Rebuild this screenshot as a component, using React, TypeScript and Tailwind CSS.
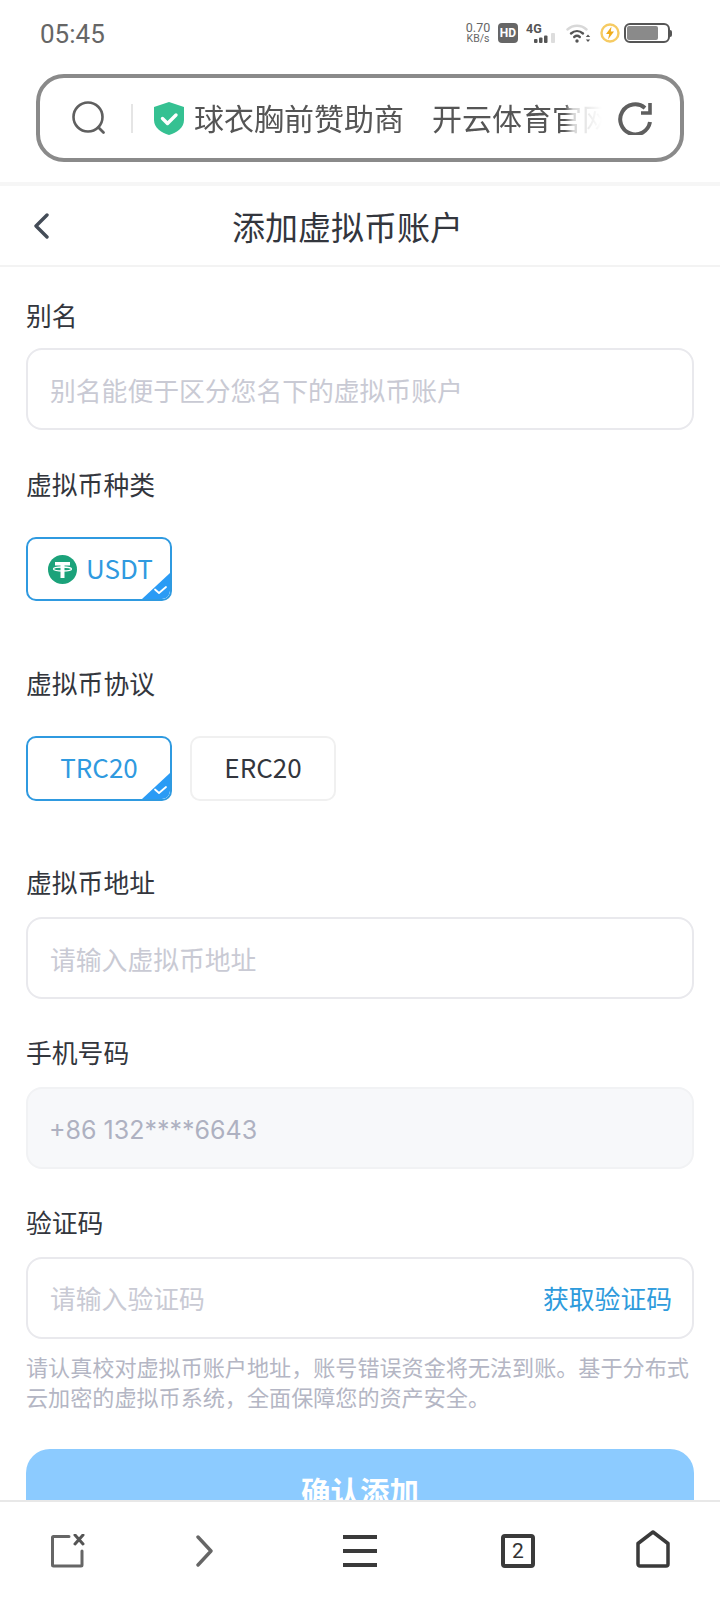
import React from 'react';

const cjk = 'font-["Noto_Sans_CJK_SC","Noto_Sans",sans-serif]';

const Check = () => (
  <span className="absolute right-0 bottom-0 w-[28px] h-[26px] overflow-hidden rounded-br-[8px]">
    <svg width="28" height="26" viewBox="0 0 28 26" className="block">
      <path d="M28 0V26H0Z" fill="#2a9bf5" />
      <path d="M13 16.5l4 3.5 7-6" fill="none" stroke="#fff" strokeWidth="1.8" strokeLinecap="round" strokeLinejoin="round" />
    </svg>
  </span>
);

const Label = ({ text, className }: { text: string; className: string }) => (
  <div className={`h-[36px] leading-[36px] text-[25.8px] text-[#33363d] ${className}`}>{text}</div>
);

const TetherIcon = () => (
  <svg width="29" height="29" viewBox="0 0 29 29" className="shrink-0">
    <circle cx="14.5" cy="14.5" r="14.5" fill="#1ba27a" />
    <path d="M7 7h15v3.500h-5.500V23h-4V10.500H7z" fill="#fff" />
    <ellipse cx="14.5" cy="14" rx="9" ry="2" fill="none" stroke="#fff" strokeWidth="1.300" />
  </svg>
);

const StatusIcons = () => (
  <div className="flex items-center mr-[48px]">
    <div className="flex flex-col items-center w-[26px] text-[#666] font-['Roboto',sans-serif]">
      <span className="text-[12.5px] leading-[12px]">0.70</span>
      <span className="text-[10.5px] leading-[10px]">KB/s</span>
    </div>
    <div className="ml-[7px] w-[20px] h-[20px] rounded-[4px] bg-[#666] text-white text-[12px] font-bold leading-[20px] text-center font-['Roboto',sans-serif]">
      HD
    </div>
    <svg width="32" height="21" viewBox="0 0 32 21" className="ml-[8px]">
      <text x="0" y="10" fontSize="12.500" fontWeight="700" fill="#555" fontFamily="Roboto, sans-serif">4G</text>
      <rect x="8" y="16" width="3.500" height="4" rx="1" fill="#555" />
      <rect x="13" y="14.500" width="3.500" height="5.500" rx="1" fill="#555" />
      <rect x="18" y="12.500" width="3.500" height="7.500" rx="1" fill="#555" />
      <rect x="25" y="10" width="4" height="10" rx="1" fill="#ddd" />
    </svg>
    <svg width="25" height="20" viewBox="0 0 25 20" className="ml-[8px]" fill="none">
      <path d="M1.500 6.500C7 1.500 15 1.500 20.500 6.500" stroke="#d8d8d8" strokeWidth="2.400" strokeLinecap="round" />
      <path d="M5 10.500c3.600-3.200 8.400-3.200 12 0" stroke="#555" strokeWidth="2.400" strokeLinecap="round" />
      <path d="M8.200 14c1.800-1.500 3.800-1.500 5.600 0" stroke="#555" strokeWidth="2.400" strokeLinecap="round" />
      <circle cx="11" cy="18" r="1.700" fill="#555" />
      <path d="M22 11.500l2.200 2.500h-4.400zM22 19l-2.200-2.500h4.400z" fill="#555" />
    </svg>
    <svg width="20" height="20" viewBox="0 0 20 20" className="ml-[9px]">
      <circle cx="10" cy="10" r="8.500" fill="#fff" stroke="#f6cb63" strokeWidth="2.400" />
      <path d="M11.500 3.500L6 11h3.200L8 16.500 14 8.500h-3.200z" fill="#f0ac1c" />
    </svg>
    <div className="ml-[4px] flex items-center">
      <div className="w-[46px] h-[20px] rounded-[6px] border-2 border-[#555] p-px">
        <div className="w-[31px] h-full rounded-[2px] bg-[#8a8a8a]" />
      </div>
      <div className="w-[2px] h-[7px] bg-[#555] rounded-r-[2px]" />
    </div>
  </div>
);

const App: React.FC = () => {
  const inputClass = 'block w-full h-[82px] rounded-[16px] border-2 outline-none';
  const textInput = `${inputClass} border-[#e9e9ed] px-[22px] text-[25.8px] placeholder:text-[#c9cad4]`;

  return (
    <div className={`w-[720px] h-[1600px] flex flex-col overflow-hidden bg-white ${cjk}`}>
      <div className="h-[66px] shrink-0 flex items-center justify-between pl-[40px]">
        <span className="mt-[2px] text-[26px] text-[#666] font-['Roboto',sans-serif]">05:45</span>
        <StatusIcons />
      </div>

      <div className="mx-[36px] mt-[8px] h-[88px] shrink-0 rounded-[28px] border-4 border-[#8a8a8a] flex items-center">
        <svg width="34" height="34" viewBox="0 0 34 34" fill="none" className="ml-[32px] shrink-0">
          <circle cx="16" cy="16" r="14.500" stroke="#5f5f5f" strokeWidth="2.600" />
          <path d="M26.500 26.500l5 5" stroke="#5f5f5f" strokeWidth="2.800" strokeLinecap="round" />
        </svg>
        <div className="ml-[25px] w-[2px] h-[29px] bg-[#e5e5e5] shrink-0" />
        <svg width="30" height="33" viewBox="0 0 30 33" className="ml-[21px] shrink-0">
          <path d="M15 0l15 5v13c0 8-7 12.500-15 15C7 30.500 0 26 0 18V5z" fill="#35c192" />
          <path d="M8.500 16.500l5 5 8.500-8.500" fill="none" stroke="#fff" strokeWidth="3.400" strokeLinecap="round" strokeLinejoin="round" />
        </svg>
        <div className="ml-[10px] mb-[2px] w-[412px] shrink-0 overflow-hidden whitespace-nowrap text-[30px] leading-[40px] text-[#555] [mask-image:linear-gradient(to_right,#000_90%,rgba(0,0,0,0.25)_92%,transparent_99%)]">
          球衣胸前赞助商<span className="ml-[28px]">开云体育官网</span>
        </div>
        <svg width="34" height="33" viewBox="0 0 34 33" fill="none" className="ml-[12px] shrink-0">
          <path d="M32 20A15 15 0 1 1 27 6" stroke="#5f5f5f" strokeWidth="4" />
          <path d="M32 1v10H23" stroke="#5f5f5f" strokeWidth="3.600" />
        </svg>
      </div>

      <div className="mt-[20px] h-[4px] shrink-0 bg-[#f6f6f6]" />

      <div className="h-[81px] shrink-0 flex items-center pl-[33px] border-b-2 border-[#f3f3f3]">
        <svg width="16" height="26" viewBox="0 0 16 26" fill="none" className="shrink-0">
          <path d="M14 2L3 13l11 11" stroke="#444c57" strokeWidth="3.400" strokeLinecap="round" strokeLinejoin="round" />
        </svg>
        <h1 className="ml-[183px] text-[33px] leading-[44px] font-normal text-[#33363d]">添加虚拟币账户</h1>
      </div>

      <div className="flex-1 min-h-0 overflow-hidden px-[26px]">
        <Label text="别名" className="mt-[30px]" />
        <input className={`${textInput} mt-[15px]`} placeholder="别名能便于区分您名下的虚拟币账户" readOnly />

        <Label text="虚拟币种类" className="mt-[36px]" />
        <div className="mt-[35px] relative w-[146px] h-[64px] rounded-[10px] border-2 border-[#2f9ae0] flex items-center pl-[20px] gap-[9px] overflow-hidden">
          <TetherIcon />
          <span className="mb-[4px] text-[26px] text-[#2f9ae0]">USDT</span>
          <Check />
        </div>

        <Label text="虚拟币协议" className="mt-[64px]" />
        <div className="mt-[35px] flex gap-[18px]">
          <div className="relative w-[146px] h-[65px] pb-[4px] rounded-[10px] border-2 border-[#2f9ae0] flex items-center justify-center text-[26px] text-[#2f9ae0] overflow-hidden">
            TRC20
            <Check />
          </div>
          <div className="w-[146px] h-[65px] pb-[4px] rounded-[10px] border-2 border-[#f0f0f0] flex items-center justify-center text-[26px] text-[#33363d]">
            ERC20
          </div>
        </div>

        <Label text="虚拟币地址" className="mt-[63px]" />
        <input className={`${textInput} mt-[17px]`} placeholder="请输入虚拟币地址" readOnly />

        <Label text="手机号码" className="mt-[35px]" />
        <input
          className={`${inputClass} mt-[17px] pl-[21px] pt-[3px] bg-[#f7f8fa] border-[#f1f2f4] text-[25px] font-['Inter',sans-serif] placeholder:text-[#aeb1c1]`}
          placeholder="+86 132****6643"
          readOnly
        />

        <Label text="验证码" className="mt-[35px]" />
        <div className="mt-[17px] h-[82px] rounded-[16px] border-2 border-[#e9e9ed] pl-[22px] pr-[20px] flex items-center justify-between text-[25.8px]">
          <span className="text-[#c9cad4]">请输入验证码</span>
          <span className="text-[#2e9bdc]">获取验证码</span>
        </div>

        <p className="mt-[12px] text-[22.1px] leading-[30px] text-[#b4b6c4]">
          请认真校对虚拟币账户地址，账号错误资金将无法到账。基于分布式云加密的虚拟币系统，全面保障您的资产安全。
        </p>

        <button className="mt-[38px] block w-full h-[82px] rounded-[24px] bg-[#8ccbff] text-white text-[29.500px] font-bold">确认添加</button>
      </div>

      <div className="h-[100px] shrink-0 border-t-2 border-[#e8e8e8] bg-white flex items-center pl-[51px]">
        <svg width="34" height="34" viewBox="0 0 34 34" fill="none" className="shrink-0">
          <path d="M18 2.500H2.500a1 1 0 0 0-1 1V31a1 1 0 0 0 1 1H30a1 1 0 0 0 1-1V17" stroke="#666" strokeWidth="3" strokeLinecap="round" />
          <path d="M24 1l8 9M32 1l-8 9" stroke="#555" strokeWidth="3" strokeLinecap="round" />
        </svg>
        <svg width="18" height="32" viewBox="0 0 18 32" fill="none" className="ml-[111px] shrink-0">
          <path d="M2 2l13 14L2 30" stroke="#666" strokeWidth="3.400" strokeLinecap="round" strokeLinejoin="round" />
        </svg>
        <div className="ml-[129px] w-[34px] flex flex-col gap-[10px] shrink-0">
          <div className="h-[4px] bg-[#3a3a3a]" />
          <div className="h-[4px] bg-[#3a3a3a]" />
          <div className="h-[4px] bg-[#3a3a3a]" />
        </div>
        <div className="ml-[124px] w-[34px] h-[34px] rounded-[4px] border-4 border-[#3a3a3a] flex items-center justify-center text-[21px] leading-none text-[#333] font-['Roboto',sans-serif] shrink-0">
          2
        </div>
        <svg width="34" height="38" viewBox="0 0 34 38" fill="none" className="ml-[101px] mb-[4px] shrink-0">
          <path d="M17 2L32 13.500V34a2 2 0 0 1-2 2H4a2 2 0 0 1-2-2V13.500z" stroke="#3a3a3a" strokeWidth="3.500" strokeLinejoin="round" />
        </svg>
      </div>
    </div>
  );
};

export default App;
